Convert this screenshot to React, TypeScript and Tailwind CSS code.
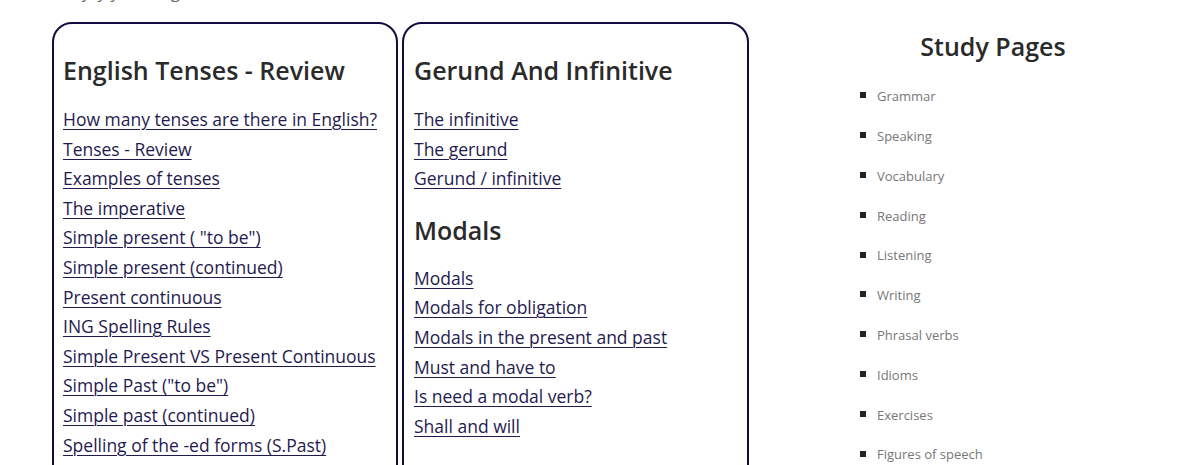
const tenses = [
  "How many tenses are there in English?",
  "Tenses - Review",
  "Examples of tenses",
  "The imperative",
  'Simple present ( "to be")',
  "Simple present (continued)",
  "Present continuous",
  "ING Spelling Rules",
  "Simple Present VS Present Continuous",
  'Simple Past ("to be")',
  "Simple past (continued)",
  "Spelling of the -ed forms (S.Past)",
];

const gerund = ["The infinitive", "The gerund", "Gerund / infinitive"];

const modals = [
  "Modals",
  "Modals for obligation",
  "Modals in the present and past",
  "Must and have to",
  "Is need a modal verb?",
  "Shall and will",
];

const studyPages = [
  "Grammar",
  "Speaking",
  "Vocabulary",
  "Reading",
  "Listening",
  "Writing",
  "Phrasal verbs",
  "Idioms",
  "Exercises",
  "Figures of speech",
];

const LinkList = ({ items }: { items: string[] }) => (
  <div className="flex flex-col">
    {items.map((t) => (
      <a
        key={t}
        href="#"
        className="text-[17.5px] leading-[29.6px] text-[#1f1b4f] underline underline-offset-[3px] decoration-1 w-fit whitespace-nowrap"
      >
        {t}
      </a>
    ))}
  </div>
);

const Heading = ({ children, className = "" }: { children: string; className?: string }) => (
  <h2 className={"text-[25px] leading-[32px] font-semibold text-[#2a2a2a] " + className}>
    {children}
  </h2>
);

export default function App() {
  return (
    <div
      className="w-[1199px] h-[465px] overflow-hidden bg-white"
      style={{ fontFamily: '"Open Sans", "Noto Sans", sans-serif' }}
    >
      <div className="flex">
        <div className="pl-[52px] flex flex-col">
          <div className="-mt-[18px] pl-[11px] text-[17px] leading-[20px] text-[#666]">
            Enjoy your English
          </div>
          <div className="flex gap-[4px] mt-[20px]">
            <div className="w-[346px] h-[480px] border-2 border-[#120d3f] rounded-[20px] pl-[9px] pt-[30px]">
              <Heading className="mb-[19px]">English Tenses - Review</Heading>
              <LinkList items={tenses} />
            </div>
            <div className="w-[347px] h-[480px] border-2 border-[#120d3f] rounded-[20px] pl-[10px] pt-[30px]">
              <Heading className="mb-[19px]">Gerund And Infinitive</Heading>
              <LinkList items={gerund} />
              <Heading className="mt-[20px] mb-[18px]">Modals</Heading>
              <LinkList items={modals} />
            </div>
          </div>
        </div>
        <div className="ml-[94px] w-[300px] flex flex-col">
          <h2 className="text-[25px] leading-[32px] font-semibold text-[#2a2a2a] text-center mt-[30px]">
            Study Pages
          </h2>
          <ul className="mt-[15px] flex flex-col">
            {studyPages.map((p) => (
              <li key={p} className="flex items-center h-[39.8px] pl-[17px]">
                <span className="w-[6px] h-[6px] bg-[#222] mr-[11px] -mt-[3px]" />
                <span className="text-[13px] text-[#777]">{p}</span>
              </li>
            ))}
          </ul>
        </div>
      </div>
    </div>
  );
}
